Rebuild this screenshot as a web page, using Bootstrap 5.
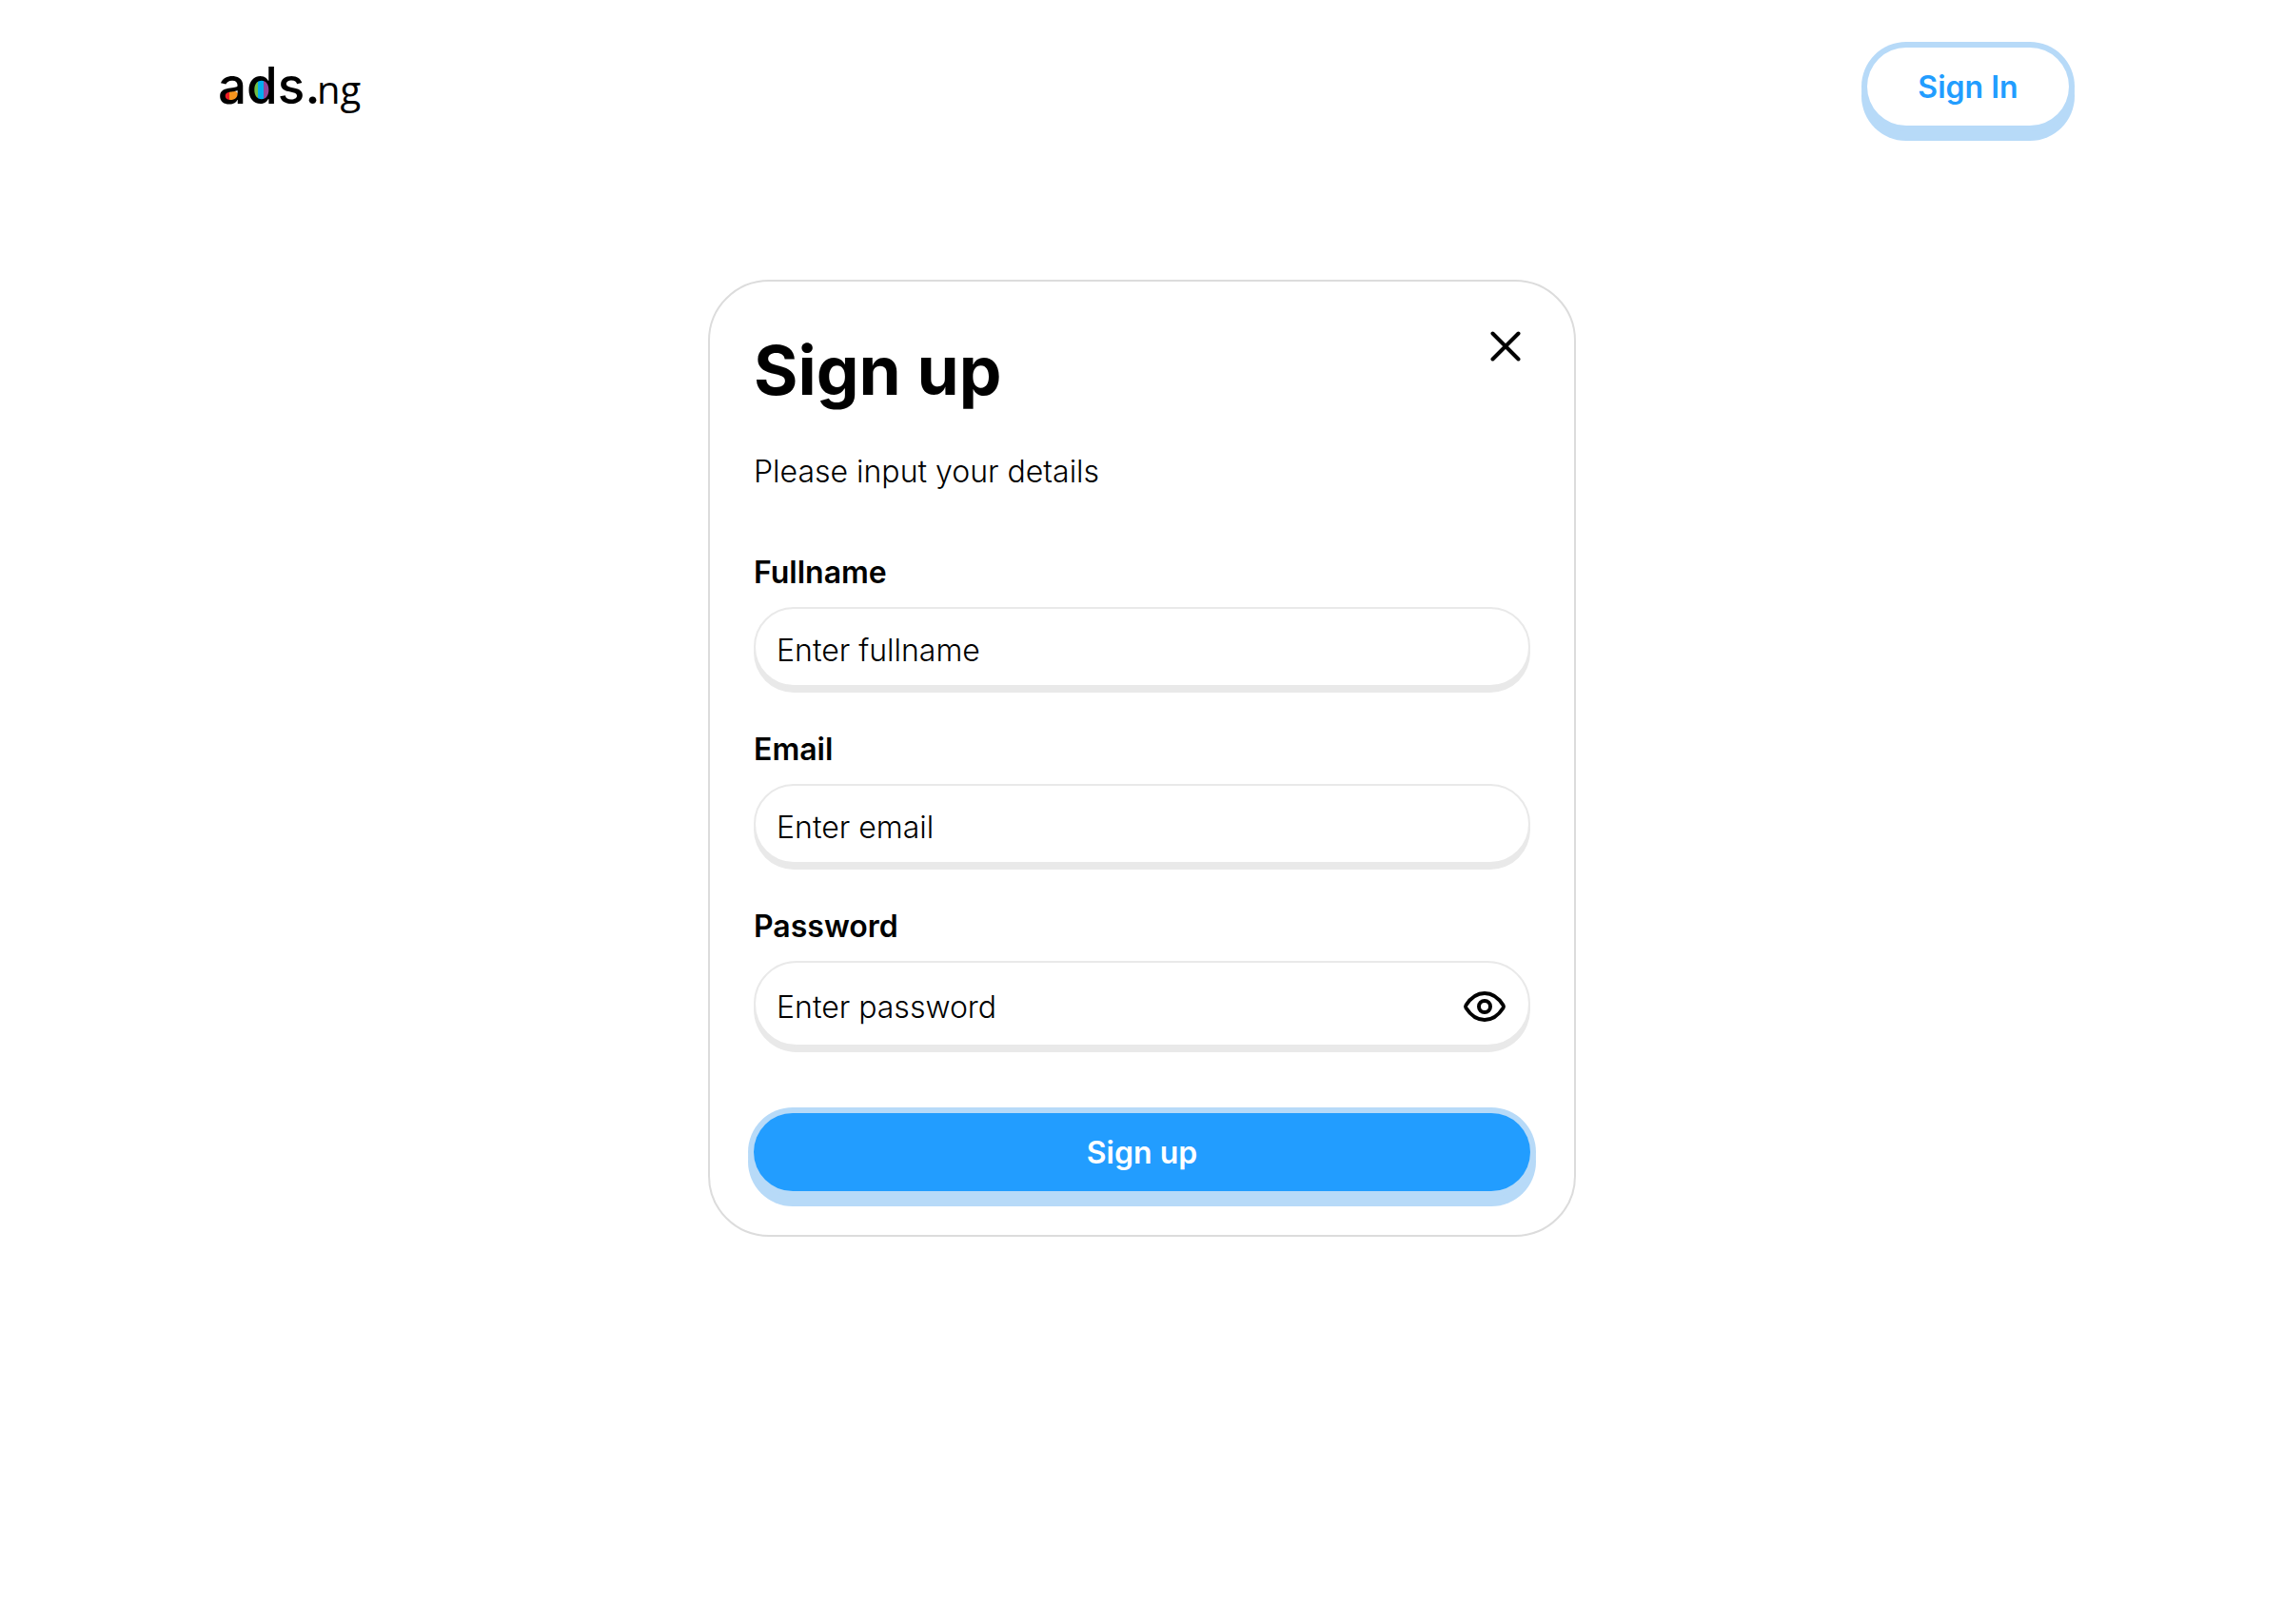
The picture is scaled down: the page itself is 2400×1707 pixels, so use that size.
<!DOCTYPE html>
<html lang="en">
<head>
<meta charset="utf-8">
<meta name="viewport" content="width=device-width, initial-scale=1">
<title>ads.ng – Sign up</title>
<link href="https://cdn.jsdelivr.net/npm/bootstrap@5.3.0/dist/css/bootstrap.min.css" rel="stylesheet">
<style>
  :root { --brand: #229dff; --halo: #b7daf8; --line: #e9e9e9; }
  body { font-family: Inter, "Liberation Sans", sans-serif; font-size: 32px; font-weight: 350; line-height: 40px; color: #000; background: #fff; }
  .site-bar { max-width: 1948px; padding-top: 50px; }
  .pill { height: 82px; border: 0; border-radius: 41px; font-size: 32px; font-weight: 600; line-height: 40px; padding: 2px 24px 0; box-shadow: 0 0 0 6px var(--halo), 0 10px 0 6px var(--halo); }
  .pill-light, .pill-light:hover { background: #fff; color: var(--brand); min-width: 212px; }
  .pill-brand, .pill-brand:hover { background: var(--brand); color: #fff; margin-top: 70px; }
  .panel { max-width: 912px; margin-top: 162px; border: 2px solid #dcdcdc; border-radius: 64px; padding: 48px 46px 46px; }
  .panel h1 { font-size: 71px; line-height: 90px; font-weight: 700; }
  .panel .intro { margin: 42px 0 66px; }
  .close-link { width: 52px; height: 40px; }
  .fields { gap: 46px; }
  .form-label { font-weight: 600; margin-bottom: 16px; display: block; }
  .form-control, .form-control:focus { height: 84px; border: 2px solid var(--line); border-radius: 42px; box-shadow: 0 6px 0 var(--line); padding: 6px 22px 0; font-size: 32px; font-weight: 350; line-height: 40px; color: #000; background: #fff; }
  .form-control::placeholder { color: #000; opacity: 1; }
  .form-control.tall { height: 90px; border-radius: 45px; padding-right: 90px; }
  .eye-toggle { right: 24px; top: 24px; width: 48px; height: 48px; }
</style>
<script src="https://cdn.jsdelivr.net/npm/bootstrap@5.3.0/dist/js/bootstrap.bundle.min.js"></script>
</head>
<body>
<header class="site-bar container-fluid px-0 d-flex justify-content-between align-items-center">
  <a href="#" aria-label="ads.ng home" class="d-block lh-1">
    <svg width="160" height="82" viewBox="226 50 160 82">
      <clipPath id="bowlA"><ellipse cx="243" cy="101" rx="8" ry="6"/></clipPath>
      <clipPath id="bowlD"><ellipse cx="275" cy="95" rx="10" ry="12"/></clipPath>
      <g clip-path="url(#bowlA)"><path d="M232 94h10v14h-10z" fill="#ed1c24"/><path d="M241 94h12v14h-12z" fill="#f7941d"/></g>
      <g clip-path="url(#bowlD)"><path d="M264 82h8v26h-8z" fill="#6fbe44"/><path d="M271 82h7v26h-7z" fill="#00aeef"/><path d="M277 82h9v26h-9z" fill="#92479b"/></g>
      <text x="229" y="109" font-family="Inter, sans-serif" font-size="53" font-weight="500">ads.</text>
      <text x="333" y="109" font-family="'Open Sans', sans-serif" font-size="40" font-weight="500">ng</text>
    </svg>
  </a>
  <button type="button" class="btn pill pill-light">Sign In</button>
</header>
<main class="panel mx-auto">
  <div class="d-flex justify-content-between align-items-start">
    <h1 class="mb-0">Sign up</h1>
    <button type="button" class="btn p-0 border-0 d-flex align-items-center justify-content-center close-link" aria-label="Close">
      <svg width="32" height="32" viewBox="0 0 32 32" fill="none" stroke="#000" stroke-width="4" stroke-linecap="round"><path d="M2.500 2.500l27 27M29.500 2.500l-27 27"/></svg>
    </button>
  </div>
  <p class="intro">Please input your details</p>
  <form>
    <div class="fields d-flex flex-column">
      <div><label class="form-label" for="fullname">Fullname</label><input class="form-control" id="fullname" type="text" placeholder="Enter fullname"></div>
      <div><label class="form-label" for="email">Email</label><input class="form-control" id="email" type="email" placeholder="Enter email"></div>
      <div>
        <label class="form-label" for="password">Password</label>
        <div class="position-relative">
          <input class="form-control tall" id="password" type="password" placeholder="Enter password">
          <button type="button" class="btn p-0 border-0 d-flex position-absolute eye-toggle" aria-label="Show password">
            <svg width="48" height="48" viewBox="0 0 48 48" fill="none" stroke="#000" stroke-width="4" stroke-linejoin="round"><path d="M4.500 22.500C9 15.500 16 10 24 10s15 5.500 19.500 12.500q.9 1.500 0 3C39 32.500 32 38 24 38S9 32.500 4.500 25.500q-.9-1.500 0-3z"/><circle cx="24" cy="24" r="6"/></svg>
          </button>
        </div>
      </div>
    </div>
    <button type="submit" class="btn pill pill-brand w-100 d-block">Sign up</button>
  </form>
</main>
</body>
</html>
